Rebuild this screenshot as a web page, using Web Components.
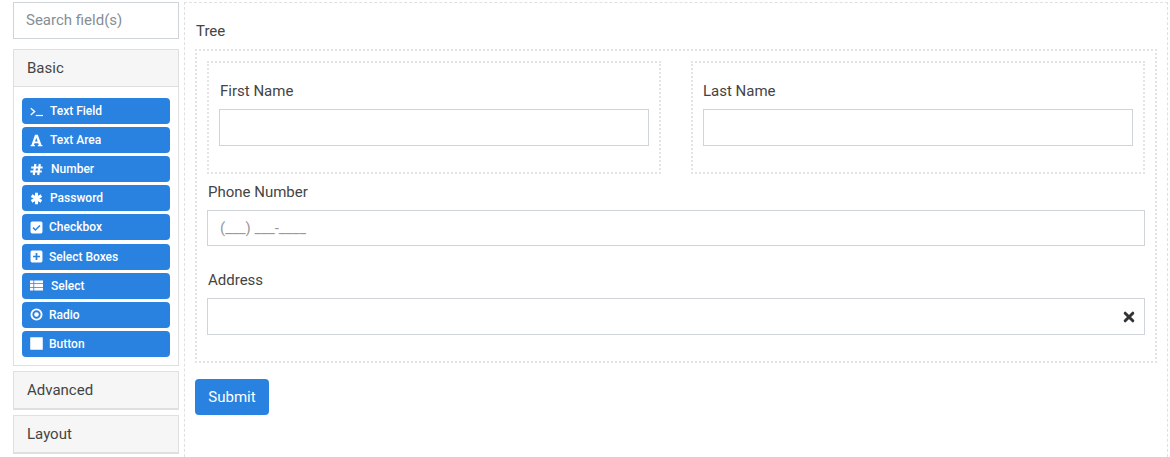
<!DOCTYPE html>
<html lang="en">
<head>
<meta charset="utf-8">
<title>Form builder</title>
<style>
html,body{margin:0;padding:0;background:#fff;height:457px;overflow:hidden;font-family:Roboto,"Liberation Sans",sans-serif;color:#444;font-size:15px}
</style>
</head>
<body>
<x-builder>
  <x-sidebar slot="side">
    <x-search>Search field(s)</x-search>
    <x-panel heading="Basic" open>
      <x-tool icon="terminal">Text Field</x-tool>
      <x-tool icon="font">Text Area</x-tool>
      <x-tool icon="hash">Number</x-tool>
      <x-tool icon="asterisk">Password</x-tool>
      <x-tool icon="check">Checkbox</x-tool>
      <x-tool icon="plus">Select Boxes</x-tool>
      <x-tool icon="list">Select</x-tool>
      <x-tool icon="dot">Radio</x-tool>
      <x-tool icon="stop">Button</x-tool>
    </x-panel>
    <x-panel heading="Advanced"></x-panel>
    <x-panel heading="Layout"></x-panel>
  </x-sidebar>
  <x-canvas slot="main">
    <x-tree-label>Tree</x-tree-label>
    <x-tree>
      <x-row>
        <x-column><x-field label="First Name"></x-field></x-column>
        <x-column><x-field label="Last Name" class="last"></x-field></x-column>
      </x-row>
      <x-field label="Phone Number" placeholder="(___) ___-____" class="phone"></x-field>
      <x-field label="Address" clear class="address"></x-field>
    </x-tree>
    <x-submit>Submit</x-submit>
  </x-canvas>
</x-builder>
<script>
const ICONS = {
  terminal:`<svg width="13" height="13" viewBox="0 0 13 13"><path d="M.8 3.200 4.600 6.600.8 10" fill="none" stroke="#fff" stroke-width="1.400"/><path d="M5.800 10.500H13" stroke="#fff" stroke-width="1.200"/></svg>`,
  font:`<svg width="13" height="13" viewBox="0 0 13 13"><path fill="#fff" fill-rule="evenodd" d="M.6 11h.8L5 .8h2.800L11.500 11h.9v1.300H7.800V11h1l-.6-1.800H4.500L3.900 11h1v1.300H.6zM6.300 3.800 5 7.500h2.600z"/></svg>`,
  hash:`<svg width="13" height="13" viewBox="0 0 13 13"><path fill="none" stroke="#fff" stroke-width="2.200" d="M5.400 1 3.800 12M9.800 1 8.200 12M1.200 4.500H12.600M.4 8.500H11.800"/></svg>`,
  asterisk:`<svg width="13" height="13" viewBox="0 0 13 13"><path fill="none" stroke="#fff" stroke-width="3" d="M6.500.8V12.200M1.600 3.600 11.400 9.400M11.400 3.600 1.600 9.400"/></svg>`,
  check:`<svg width="13" height="13" viewBox="0 0 12 12"><path fill="#fff" fill-rule="evenodd" d="M2 .5h8A1.500 1.500 0 0 1 11.500 2v8A1.500 1.500 0 0 1 10 11.500H2A1.500 1.500 0 0 1 .5 10V2A1.500 1.500 0 0 1 2 .5zM5 9.300 9.700 4.600 8.700 3.600 5 7.300 3.300 5.600 2.300 6.600z"/></svg>`,
  plus:`<svg width="13" height="13" viewBox="0 0 12 12"><path fill="#fff" fill-rule="evenodd" d="M2 .5h8A1.500 1.500 0 0 1 11.500 2v8A1.500 1.500 0 0 1 10 11.500H2A1.500 1.500 0 0 1 .5 10V2A1.500 1.500 0 0 1 2 .5zM5.200 2.800V5.200H2.800V6.800H5.200V9.200H6.800V6.800H9.200V5.200H6.800V2.800z"/></svg>`,
  list:`<svg width="13" height="13" viewBox="0 0 13 13"><path fill="#fff" d="M0 1.500h3.400v2.800H0zM4.200 1.500H13v2.800H4.200zM0 5.100h3.400v2.800H0zM4.200 5.100H13v2.800H4.200zM0 8.700h3.400v2.800H0zM4.200 8.700H13v2.800H4.200z"/></svg>`,
  dot:`<svg width="13" height="13" viewBox="0 0 12 12"><circle cx="6" cy="6" r="4.700" fill="none" stroke="#fff" stroke-width="1.700"/><circle cx="6" cy="6" r="2.100" fill="#fff"/></svg>`,
  stop:`<svg width="13" height="13" viewBox="0 0 12 12"><rect x=".2" y=".2" width="11.600" height="11.600" rx=".3" fill="#fff"/></svg>`
};
const OFFS = {terminal:7,font:7,hash:8,asterisk:7,check:6,plus:6,list:8,dot:6,stop:6};
function define(name, css, html){
  customElements.define(name, class extends HTMLElement{
    constructor(){super();const r=this.attachShadow({mode:'open'});r.innerHTML=`<style>${css}</style>`+html;}
  });
}
define('x-builder',`:host{display:flex;gap:5px;padding:2px 2px 0 13px;height:455px;box-sizing:border-box}
  .s{display:block;width:166px;flex:none}.m{display:block;flex:1;min-width:0}`,
  `<div class="s"><slot name="side"></slot></div><div class="m"><slot name="main"></slot></div>`);
define('x-sidebar',`:host{display:flex;flex-direction:column}`,`<slot></slot>`);
define('x-search',`:host{display:flex;align-items:center;box-sizing:border-box;height:37px;border:1px solid #ced4da;padding:0 12px 2px;color:#868e96;font-size:15px;margin-bottom:10px;background:#fff}`,`<slot></slot>`);
class XPanel extends HTMLElement{
  constructor(){super();const r=this.attachShadow({mode:'open'});
    r.innerHTML=`<style>
    :host{display:block;box-sizing:border-box;border:1px solid #dfdfdf;margin-bottom:5px;background:#fff;font-size:15px}
    .h{box-sizing:border-box;height:37px;display:flex;align-items:center;padding:0 13px;background:#f6f6f6;color:#444;border-bottom:1px solid #dfdfdf}
    :host(:not([open])) .h{padding-top:1px}
    :host(:not([open])) .b{display:none}
    .b{display:flex;flex-direction:column;gap:3.12px;padding:11px 8px 8px}
    </style><div class="h"></div><div class="b"><slot></slot></div>`;}
  connectedCallback(){this.shadowRoot.querySelector('.h').textContent=this.getAttribute('heading');}
}
customElements.define('x-panel',XPanel);
class XTool extends HTMLElement{
  constructor(){super();const r=this.attachShadow({mode:'open'});
    r.innerHTML=`<style>
    :host{display:flex;align-items:center;box-sizing:border-box;height:26px;background:#2a82e0;border-radius:4px;color:#fff;font-size:12px;font-weight:500;padding-left:8px}
    .i{display:inline-flex;flex:none;width:13px;height:13px}
    .t{display:block;white-space:nowrap}
    </style><span class="i"></span><span class="t"><slot></slot></span>`;}
  connectedCallback(){const k=this.getAttribute('icon');
    this.shadowRoot.querySelector('.i').innerHTML=ICONS[k];
    this.shadowRoot.querySelector('.t').style.marginLeft=OFFS[k]+'px';}
}
customElements.define('x-tool',XTool);
define('x-canvas',`:host{display:block;box-sizing:border-box;height:470px;border:1px dashed #e0e0e0;padding:17px 10px 0}`,`<slot></slot>`);
define('x-tree-label',`:host{display:block;line-height:22px;height:22px;margin:0 0 7px 1px;font-size:15px;color:#444}`,`<slot></slot>`);
define('x-tree',`:host{display:flex;flex-direction:column;box-sizing:border-box;height:314px;border:2px dotted #e4e4e4;padding:10px}`,`<slot></slot>`);
define('x-row',`:host{display:flex;gap:30px;margin-bottom:7px}`,`<slot></slot>`);
define('x-column',`:host{display:block;flex:1;min-width:0;box-sizing:border-box;height:113px;border:2px dotted #e4e4e4;padding:10px}`,`<slot></slot>`);
class XField extends HTMLElement{
  constructor(){super();const r=this.attachShadow({mode:'open'});
    r.innerHTML=`<style>
    :host{display:block;font-size:15px;color:#444}
    :host(.address){margin-top:23px}
    .l{display:block;height:22px;line-height:22px;margin:7px 0 7px 1px}
    :host(.last) .l{margin-left:0}
    :host(.phone) .l, :host(.address) .l{margin:0 0 7px 1px}
    .c{display:flex;align-items:center;justify-content:space-between;box-sizing:border-box;height:37px;border:1px solid #ced4da;background:#fff;padding:0 12px;color:#999}
    :host(.phone) .c{height:36px}
    svg{margin-right:-3px}
    </style><span class="l"></span><div class="c"><span class="p"></span></div>`;}
  connectedCallback(){const s=this.shadowRoot;
    s.querySelector('.l').textContent=this.getAttribute('label');
    s.querySelector('.p').textContent=this.getAttribute('placeholder')||'';
    if(this.hasAttribute('clear')) s.querySelector('.c').insertAdjacentHTML('beforeend',`<svg width="12" height="12" viewBox="0 0 12 12"><path d="M2.200 2.200 9.800 9.800M9.800 2.200 2.200 9.800" stroke="#333" stroke-width="3" stroke-linecap="round"/></svg>`);}
}
customElements.define('x-field',XField);
define('x-submit',`:host{display:inline-flex;align-items:center;justify-content:center;box-sizing:border-box;width:74px;height:36px;margin-top:16px;background:#2a82e0;color:#fff;border-radius:4px;font-size:15px}`,`<slot></slot>`);
</script>
</body>
</html>
